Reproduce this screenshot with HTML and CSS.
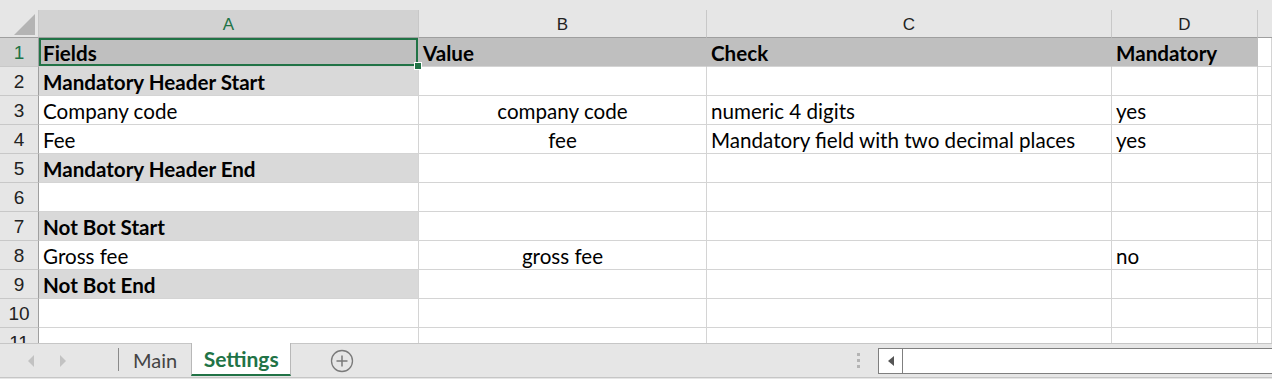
FILE: index.html
```html
<!DOCTYPE html>
<html>
<head>
  <title>Settings</title>
  <link rel="stylesheet" href="styles.css">
</head>
<body>
  <div class="book">
    <div class="sheet">
      <div class="grid">
        <div class="corner"><span class="tri"></span></div>
        <div class="colhead sel">A</div>
        <div class="colhead">B</div>
        <div class="colhead">C</div>
        <div class="colhead">D</div>
        <div class="colhead end"></div>

        <div class="rowhead sel">1</div>
        <div class="cell hdr b active">Fields<span class="handle"></span></div>
        <div class="cell hdr b">Value</div>
        <div class="cell hdr b">Check</div>
        <div class="cell hdr b">Mandatory</div>
        <div class="cell"></div>

        <div class="rowhead">2</div>
        <div class="cell fill b">Mandatory Header Start</div>
        <div class="cell"></div><div class="cell"></div><div class="cell"></div><div class="cell"></div>

        <div class="rowhead">3</div>
        <div class="cell">Company code</div>
        <div class="cell mid">company code</div>
        <div class="cell">numeric 4 digits</div>
        <div class="cell">yes</div>
        <div class="cell"></div>

        <div class="rowhead">4</div>
        <div class="cell">Fee</div>
        <div class="cell mid">fee</div>
        <div class="cell">Mandatory field with two decimal places</div>
        <div class="cell">yes</div>
        <div class="cell"></div>

        <div class="rowhead">5</div>
        <div class="cell fill b">Mandatory Header End</div>
        <div class="cell"></div><div class="cell"></div><div class="cell"></div><div class="cell"></div>

        <div class="rowhead">6</div>
        <div class="cell"></div><div class="cell"></div><div class="cell"></div><div class="cell"></div><div class="cell"></div>

        <div class="rowhead">7</div>
        <div class="cell fill b">Not Bot Start</div>
        <div class="cell"></div><div class="cell"></div><div class="cell"></div><div class="cell"></div>

        <div class="rowhead">8</div>
        <div class="cell">Gross fee</div>
        <div class="cell mid">gross fee</div>
        <div class="cell"></div>
        <div class="cell">no</div>
        <div class="cell"></div>

        <div class="rowhead">9</div>
        <div class="cell fill b">Not Bot End</div>
        <div class="cell"></div><div class="cell"></div><div class="cell"></div><div class="cell"></div>

        <div class="rowhead">10</div>
        <div class="cell"></div><div class="cell"></div><div class="cell"></div><div class="cell"></div><div class="cell"></div>

        <div class="rowhead">11</div>
        <div class="cell"></div><div class="cell"></div><div class="cell"></div><div class="cell"></div><div class="cell"></div>
      </div>
    </div>

    <div class="tabbar">
      <div class="nav">
        <span class="arrow left"></span>
        <span class="arrow right"></span>
      </div>
      <div class="tabs">
        <div class="tab">Main</div>
        <div class="tab current">Settings</div>
        <div class="addtab">
          <svg width="24" height="24" viewBox="0 0 24 24">
            <circle cx="12" cy="12" r="10.5" fill="none" stroke="#7a7a7a" stroke-width="1.3"/>
            <path d="M12 6.5v11M6.5 12h11" stroke="#7a7a7a" stroke-width="1.5"/>
          </svg>
        </div>
      </div>
      <div class="dots"><i></i><i></i><i></i></div>
      <div class="hscroll">
        <div class="sbtn"><span class="sarrow"></span></div>
        <div class="strack"></div>
      </div>
    </div>
  </div>
</body>
</html>
```

FILE: styles.css
```css
body {
  margin: 0;
  padding: 0;
  background-color: #e6e6e6;
  font-family: "Lato", "Liberation Sans", sans-serif;
  font-size: 20.6px;
  color: #000;
  overflow: hidden;
}
.book {
  width: 1272px;
  height: 379px;
  display: flex;
  flex-direction: column;
}
.sheet {
  padding-top: 10px;
  height: 333px;
  overflow: hidden;
}
.grid {
  display: grid;
  grid-template-columns: 39px 380px 288px 405px 146px 1fr;
  grid-template-rows: 28px repeat(11, 29px);
  background-color: #fff;
}
.corner {
  background-color: #e6e6e6;
  border-right: 1px solid #c8c8c8;
  border-bottom: 1px solid #9f9f9f;
  position: relative;
}
.tri {
  position: absolute;
  right: 3px;
  bottom: 2px;
  width: 0;
  height: 0;
  border-left: 21px solid transparent;
  border-bottom: 21px solid #b4b4b4;
}
.colhead {
  background-color: #e6e6e6;
  border-right: 1px solid #c8c8c8;
  border-bottom: 1px solid #9f9f9f;
  font-family: "Liberation Sans", sans-serif;
  font-size: 17px;
  color: #222;
  display: flex;
  align-items: center;
  justify-content: center;
  padding-top: 2px;
}
.colhead.sel {
  background-color: #d2d2d2;
  color: #217346;
}
.colhead.end {
  border-right: 0;
}
.rowhead {
  background-color: #e6e6e6;
  border-right: 1px solid #9f9f9f;
  border-bottom: 1px solid #c8c8c8;
  font-family: "Liberation Sans", sans-serif;
  font-size: 19px;
  color: #222;
  display: flex;
  align-items: center;
  justify-content: center;
  padding-top: 1px;
}
.rowhead.sel {
  background-color: #d2d2d2;
  color: #217346;
}
.cell {
  border-right: 1px solid #d4d4d4;
  border-bottom: 1px solid #d4d4d4;
  padding: 0 4px 0 4px;
  display: flex;
  align-items: flex-end;
  line-height: 1.2;
  white-space: nowrap;
  overflow: visible;
}
.cell.b {
  font-weight: bold;
}
.cell.mid {
  justify-content: center;
}
.cell.hdr {
  background-color: #bfbfbf;
  border-right-color: #bfbfbf;
}
.cell.fill {
  background-color: #d9d9d9;
}
.cell.active {
  position: relative;
  box-shadow: inset 0 0 0 2px #217346;
}
.handle {
  position: absolute;
  right: -4px;
  bottom: -4px;
  width: 6px;
  height: 6px;
  background-color: #217346;
  border: 1px solid #fff;
  z-index: 2;
}

.tabbar {
  height: 33px;
  border-top: 1px solid #c6c6c6;
  border-bottom: 1px solid #c6c6c6;
  display: flex;
  align-items: stretch;
  background-color: #e6e6e6;
}
.nav {
  width: 118px;
  display: flex;
  align-items: center;
  padding-left: 28px;
  gap: 26px;
  box-sizing: border-box;
}
.arrow {
  width: 0;
  height: 0;
  border-top: 6px solid transparent;
  border-bottom: 6px solid transparent;
}
.arrow.left {
  border-right: 6px solid #c2c2c2;
}
.arrow.right {
  border-left: 6px solid #c2c2c2;
}
.tabs {
  display: flex;
  align-items: stretch;
  width: 720px;
}
.tab {
  font-family: "Lato", sans-serif;
  font-size: 20px;
  color: #444;
  display: flex;
  align-items: center;
  padding: 0 14px;
  margin-bottom: 2px;
}
.tabs .tab:first-child {
  border-left: 1px solid #8a8a8a;
  margin-top: 4px;
  margin-bottom: 6px;
}
.tab.current {
  background-color: #fff;
  color: #217346;
  font-weight: bold;
  font-size: 21px;
  width: 100px;
  padding: 0;
  box-sizing: border-box;
  justify-content: center;
  margin-top: -1px;
  border-left: 1px solid #b8b8b8;
  border-right: 1px solid #b8b8b8;
  border-bottom: 2px solid #217346;
  margin-bottom: 1px;
}
.addtab {
  display: flex;
  align-items: center;
  padding-left: 39px;
}
.dots {
  width: 40px;
  display: flex;
  flex-direction: column;
  align-items: center;
  justify-content: center;
  gap: 3px;
}
.dots i {
  display: block;
  width: 3px;
  height: 3px;
  background-color: #b4b4b4;
}
.hscroll {
  flex: 1;
  margin: 4px 0 3px 0;
  border: 1px solid #7f7f7f;
  border-right: 0;
  background-color: #fff;
  display: flex;
}
.sbtn {
  width: 23px;
  border-right: 1px solid #7f7f7f;
  display: flex;
  align-items: center;
  justify-content: center;
}
.sarrow {
  width: 0;
  height: 0;
  border-top: 5px solid transparent;
  border-bottom: 5px solid transparent;
  border-right: 6px solid #555;
}
.strack {
  flex: 1;
}
```
